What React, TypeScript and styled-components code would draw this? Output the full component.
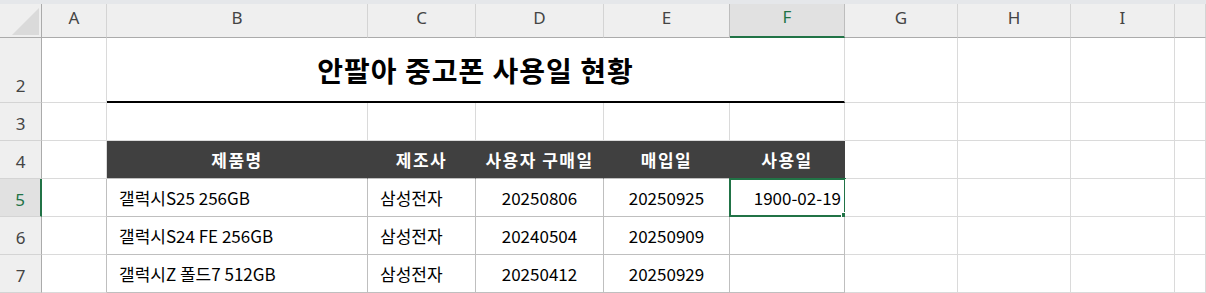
import styled, { createGlobalStyle } from "styled-components";

const GlobalStyle = createGlobalStyle`
  html, body {
    margin: 0;
    padding: 0;
    background: #fff;
    overflow: hidden;
  }
  * {
    box-sizing: border-box;
  }
`;

const GREEN = "#217346";
const GRID = "#dadada";
const TABLE = "#bfbfbf";

const ScPage = styled.div`
  width: 1206px;
  height: 293px;
  overflow: hidden;
  background: #fff;
  font-family: "Noto Sans CJK KR", "Noto Sans", sans-serif;
`;

const ScTopStrip = styled.div`
  height: 4px;
  background: #e5e7ea;
`;

const ScSheet = styled.div`
  display: grid;
  grid-template-columns: 42px 65px 261px 108px 128px 126px 115px 113px 113px 104px 1fr;
  grid-template-rows: 34px 65px repeat(5, 38px);
`;

const ScCorner = styled.div`
  display: flex;
  align-items: flex-end;
  justify-content: flex-end;
  padding: 0 2px 2px 0;
  background: #efefef;
  border-right: 1px solid #ababab;
  border-bottom: 1px solid #ababab;
`;

const ScColHead = styled.div<{ $selected?: boolean }>`
  display: flex;
  align-items: center;
  justify-content: center;
  padding-bottom: 7px;
  font-family: "Noto Sans", sans-serif;
  font-size: 17px;
  color: ${(p) => (p.$selected ? GREEN : "#444")};
  background: ${(p) => (p.$selected ? "#e1e1e1" : "#efefef")};
  border-right: 1px solid ${(p) => (p.$selected ? "#bdbdbd" : "#d4d4d4")};
  border-bottom: ${(p) => (p.$selected ? `2px solid ${GREEN}` : "1px solid #ababab")};
  box-shadow: ${(p) => (p.$selected ? "-1px 0 0 #bdbdbd" : "none")};
`;

const ScRowHead = styled.div<{ $selected?: boolean }>`
  display: flex;
  align-items: flex-end;
  justify-content: center;
  font-family: "Noto Sans", sans-serif;
  font-size: 17px;
  line-height: 1;
  padding-bottom: 8px;
  color: ${(p) => (p.$selected ? GREEN : "#444")};
  background: ${(p) => (p.$selected ? "#e1e1e1" : "#efefef")};
  border-right: ${(p) => (p.$selected ? `2px solid ${GREEN}` : "1px solid #ababab")};
  border-bottom: 1px solid #d4d4d4;
`;

type Tone = "grid" | "table" | "head";
type Align = "left" | "center" | "right";

const ScCell = styled.div<{ $tone?: Tone; $align?: Align; $edge?: boolean }>`
  position: relative;
  display: flex;
  align-items: center;
  justify-content: ${(p) =>
    p.$align === "left" ? "flex-start" : p.$align === "right" ? "flex-end" : "center"};
  padding: ${(p) => (p.$align === "left" ? "0 0 0 12px" : p.$align === "right" ? "0 3px 0 0" : "0")};
  font-size: 17px;
  font-weight: ${(p) => (p.$tone === "head" ? 700 : 400)};
  letter-spacing: ${(p) => (p.$tone === "head" ? "1.5px" : "0")};
  white-space: nowrap;
  color: ${(p) => (p.$tone === "head" ? "#fff" : "#000")};
  background: ${(p) => (p.$tone === "head" ? "#404040" : "#fff")};
  border-right: 1px solid
    ${(p) => (p.$tone === "head" ? "#404040" : p.$tone === "table" || p.$edge ? TABLE : GRID)};
  border-bottom: 1px solid ${(p) => (p.$tone === "table" || p.$tone === "head" ? TABLE : GRID)};
`;

const ScTitle = styled.div`
  grid-column: span 5;
  display: flex;
  align-items: center;
  justify-content: center;
  font-size: 28px;
  font-weight: 700;
  letter-spacing: 1px;
  color: #000;
  border-right: 1px solid ${GRID};
  border-bottom: 2px solid #000;
`;

const ScSelection = styled.div`
  position: absolute;
  top: -1px;
  left: -1px;
  right: -2px;
  bottom: -1px;
  border: 2px solid ${GREEN};
  pointer-events: none;
`;

const ScFillHandle = styled.div`
  position: absolute;
  right: -4px;
  bottom: -4px;
  width: 7px;
  height: 7px;
  background: ${GREEN};
  border: 1px solid #fff;
`;

const COLS = ["A", "B", "C", "D", "E", "F", "G", "H", "I", ""];
const EXTRA = 4; // G, H, I, J

const HEADERS = ["제품명", "제조사", "사용자 구매일", "매입일", "사용일"];
const ALIGN: Align[] = ["left", "left", "center", "center", "right"];

const ROWS = [
  { n: 5, cells: ["갤럭시S25 256GB", "삼성전자", "20250806", "20250925", "1900-02-19"] },
  { n: 6, cells: ["갤럭시S24 FE 256GB", "삼성전자", "20240504", "20250909", ""] },
  { n: 7, cells: ["갤럭시Z 폴드7 512GB", "삼성전자", "20250412", "20250929", ""] },
];

const Blanks = ({ count }: { count: number }) => (
  <>
    {Array.from({ length: count }, (_, i) => (
      <ScCell key={i} />
    ))}
  </>
);

export default function App() {
  return (
    <ScPage>
      <GlobalStyle />
      <ScTopStrip />
      <ScSheet>
        <ScCorner>
          <svg width="27" height="27" viewBox="0 0 27 27">
            <polygon points="27,0 27,27 0,27" fill="#dadada" />
          </svg>
        </ScCorner>
        {COLS.map((c, i) => (
          <ScColHead key={i} $selected={c === "F"}>
            {c}
          </ScColHead>
        ))}

        <ScRowHead>2</ScRowHead>
        <ScCell />
        <ScTitle>안팔아 중고폰 사용일 현황</ScTitle>
        <Blanks count={EXTRA} />

        <ScRowHead>3</ScRowHead>
        <Blanks count={6} />
        <Blanks count={EXTRA} />

        <ScRowHead>4</ScRowHead>
        <ScCell />
        {HEADERS.map((h) => (
          <ScCell key={h} $tone="head">
            {h}
          </ScCell>
        ))}
        <Blanks count={EXTRA} />

        {ROWS.map((row) => (
          <>
            <ScRowHead key={`h${row.n}`} $selected={row.n === 5}>
              {row.n}
            </ScRowHead>
            <ScCell key={`a${row.n}`} $edge />
            {row.cells.map((v, i) => (
              <ScCell key={`${row.n}-${i}`} $tone="table" $align={ALIGN[i]}>
                {v}
                {row.n === 5 && i === 4 && (
                  <ScSelection>
                    <ScFillHandle />
                  </ScSelection>
                )}
              </ScCell>
            ))}
            <Blanks key={`b${row.n}`} count={EXTRA} />
          </>
        ))}
      </ScSheet>
    </ScPage>
  );
}
